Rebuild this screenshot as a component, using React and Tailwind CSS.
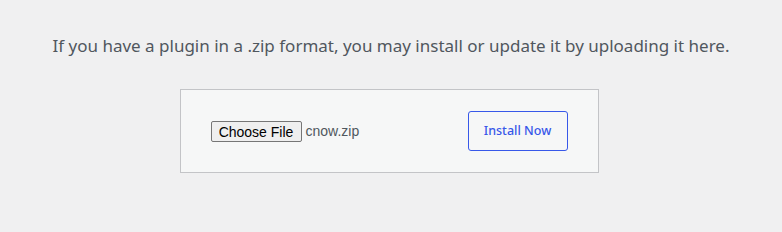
import React from 'react';

function App() {
  return (
    <div className="min-h-[232px] w-full bg-[#f0f0f1] flex flex-col items-center" style={{ fontFamily: '"Noto Sans", sans-serif' }}>
      <p className="mt-[33px] text-[17px] leading-[25px] text-[#50575e]">
        If you have a plugin in a .zip format, you may install or update it by uploading it here.
      </p>
      <form className="mt-[31px] ml-[-4px] w-[419px] h-[84px] border border-[#c3c4c7] bg-[#f6f7f7] flex items-center justify-between pl-[30px] pr-[30px]">
        <div className="flex items-center gap-[4px] mt-[1px]">
          <button
            type="button"
            className="h-[21px] w-[91px] bg-[#efefef] border border-[#767676] rounded-[2px] text-[14px] text-black leading-none"
            style={{ fontFamily: '"Liberation Sans", Arial, sans-serif' }}
          >
            Choose File
          </button>
          <span className="text-[14px] text-[#50575e]" style={{ fontFamily: '"Liberation Sans", Arial, sans-serif' }}>
            cnow.zip
          </span>
        </div>
        <button
          type="button"
          className="h-[40px] w-[100px] border border-[#3858e9] rounded-[3px] text-[#3858e9] text-[12.5px] font-medium bg-[#f6f7f7]"
        >
          Install Now
        </button>
      </form>
    </div>
  );
}

export default App;
